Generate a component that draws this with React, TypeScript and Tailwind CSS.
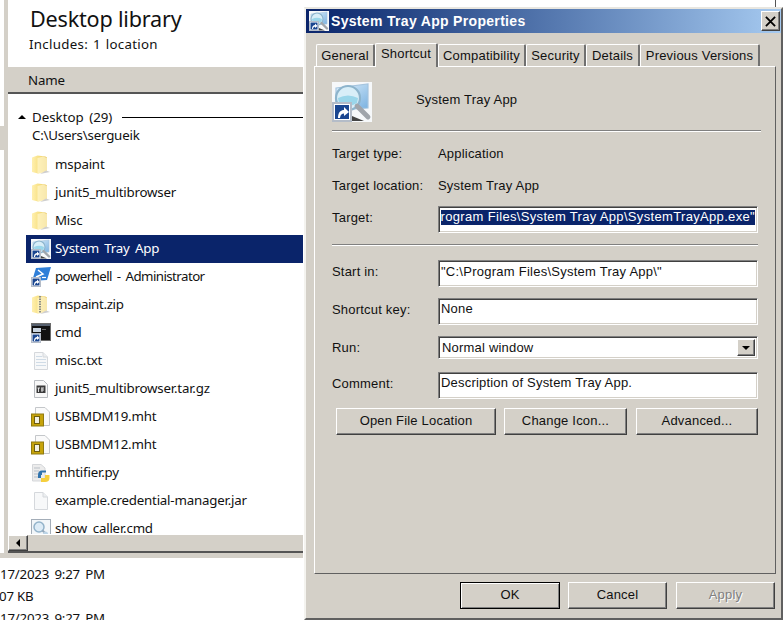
import React from "react";

const Shortcut = () => (
  <g>
    <rect x="0.5" y="10.5" width="9" height="9" fill="#fff" stroke="#b4bcc8" strokeWidth="1" />
    <rect x="1.5" y="11.5" width="7" height="7" fill="#1a4690" />
    <path d="M3 18 C3 15 4.5 14 6 14 L6 12.5 L8.5 15 L6 17 L6 15.8 C5 15.8 4.2 16.4 4 18 Z" fill="#fff" />
  </g>
);

const Tool = ({ sc = true, bg = true }: { sc?: boolean; bg?: boolean }) => (
  <svg viewBox="0 0 20 20" className="w-full h-full block">
    <defs>
      <linearGradient id="scr" x1="0" y1="0" x2="1" y2="1">
        <stop offset="0" stopColor="#e2f2fc" />
        <stop offset="1" stopColor="#78b0e0" />
      </linearGradient>
    </defs>
    {bg && <rect width="20" height="20" fill="#f6f8fa" />}
    <path d="M2 3 L18 1 L18 13 L2 14 Z" fill="url(#scr)" stroke="#a5c4de" strokeWidth="0.6" />
    <circle cx="8" cy="8" r="6" fill="#d8eef8" stroke="#8db4cc" strokeWidth="1.1" />
    <path d="M3 8 Q8 5.5 13 8 L12.5 10.5 Q8 13.5 3.5 10.5 Z" fill="#9ad6ea" />
    <path d="M12.5 12 L18 17.5" stroke="#a0a5ab" strokeWidth="2.4" strokeLinecap="round" />
    <path d="M10 17 L16 19.5 L10 19.5 Z" fill="#444" />
    {sc && <Shortcut />}
  </svg>
);

const Folder = ({ zip = false }: { zip?: boolean }) => (
  <svg viewBox="0 0 20 20" className="w-full h-full block">
    <defs>
      <linearGradient id="fo" x1="0" y1="0" x2="1" y2="0">
        <stop offset="0" stopColor="#fff0b0" />
        <stop offset="0.5" stopColor="#f7df80" />
        <stop offset="1" stopColor="#e9c964" />
      </linearGradient>
    </defs>
    <path d="M1 2.5 L6.5 0.5 L14.5 1.5 L16 2.5 L16 16.5 L7 18.5 L1 17 Z" fill="url(#fo)" />
    <path d="M6.5 3 L12 1.5 L16 3 L16 16.5 L8 18.5 L6.5 18 Z" fill="#fff8d4" opacity="0.65" />
    <path d="M9 19 L19 17 L15 15.5 Z" fill="#cfcfcf" />
    {zip ? <path d="M9 1 L9 18" stroke="#8d8f88" strokeWidth="2" strokeDasharray="1.5 1" /> : null}
  </svg>
);

const Power = () => (
  <svg viewBox="0 0 20 20" className="w-full h-full block">
    <path d="M5 1 L20 0 L16 13 L1 14 Z" fill="#2f7fd8" />
    <path d="M7 3 L12 7 L5 10" fill="none" stroke="#fff" strokeWidth="1.5" />
    <path d="M11 10.5 L15 10.5" stroke="#fff" strokeWidth="1.2" />
    <Shortcut />
  </svg>
);

const Cmd = () => (
  <svg viewBox="0 0 20 20" className="w-full h-full block">
    <rect x="0.5" y="0.5" width="19" height="17" fill="#111" stroke="#6b6b6b" />
    <rect x="1" y="1" width="18" height="2" fill="#56606e" />
    <rect x="2" y="5" width="8" height="4" fill="#c9d4e0" />
    <rect x="11" y="6" width="4" height="1" fill="#666" />
    <Shortcut />
  </svg>
);

const Doc = ({ lines = false }: { lines?: boolean }) => (
  <svg viewBox="0 0 20 20" className="w-full h-full block">
    <path d="M3.5 1.5 L12 1.5 L16.5 6 L16.5 18.5 L3.5 18.5 Z" fill="#f7f8f9" stroke="#d5d8dc" />
    <path d="M12 1.5 L12 6 L16.5 6" fill="#eceef0" stroke="#d5d8dc" />
    {lines && (
      <path d="M5 5.5 H11 M5 8.5 H15 M5 11.5 H15 M5 14.5 H15" stroke="#cfdbe6" strokeWidth="1.2" />
    )}
  </svg>
);

const Tar = () => (
  <svg viewBox="0 0 20 20" className="w-full h-full block">
    <path d="M3.5 1.5 L12.5 1.5 L16.5 5.5 L16.5 18.5 L3.5 18.5 Z" fill="#f8f8f8" stroke="#b9bcc0" />
    <rect x="5.5" y="6.5" width="9" height="7.5" fill="#3b3b3b" />
    <path d="M6.5 9 H9 M7.5 9 V13 M10 9 L13 9 M10 11 L13 11 M11 9 V13" stroke="#eee" strokeWidth="0.9" />
  </svg>
);

const Mht = () => (
  <svg viewBox="0 0 20 20" className="w-full h-full block">
    <path d="M4.5 0.5 L14 0.5 L18.5 5 L18.5 18.5 L4.5 18.5 Z" fill="#fafafa" stroke="#c4c7ca" />
    <rect x="0.5" y="7" width="12" height="12" fill="#c6a30a" stroke="#8f7a10" />
    <rect x="3.5" y="9.5" width="5" height="7" fill="#f3f1e2" stroke="#6d5d10" />
  </svg>
);

const Py = () => (
  <svg viewBox="0 0 20 20" className="w-full h-full block">
    <path d="M1.5 1.5 L10 1.5 L14 5 L14 18 L1.5 18 Z" fill="#ececec" stroke="#d5d7da" />
    <path d="M3 5 H9 M3 8 H8 M3 11 H7 M3 14 H7" stroke="#b9bfc6" strokeWidth="1" />
    <path d="M7 12 Q7 7.5 11 7.5 L15 7.5 L15 9.5 L11 9.5 L11 12 Z M7 12 L7 15 L10 15 L10 12 Z" fill="#2f73ad" />
    <path d="M10 15 L14 15 L14 12 L18.5 12 L18.5 15 Q18.5 19 14 19 L10 19 Z" fill="#f5cf3e" />
  </svg>
);

const Show = () => (
  <svg viewBox="0 0 20 20" className="w-full h-full block">
    <rect x="0.5" y="0.5" width="19" height="19" fill="#f2f6f9" stroke="#a3adb8" />
    <circle cx="8" cy="8" r="5" fill="#dcebf6" stroke="#93b3ca" strokeWidth="1.5" />
    <path d="M11.5 11.5 L15 15" stroke="#93a6b8" strokeWidth="2" />
    <circle cx="14.5" cy="15" r="2.5" fill="#bcd4e6" />
  </svg>
);

const rows: { icon: React.ReactNode; name: string; sel?: boolean; c?: string }[] = [
  { icon: <Folder />, name: "mspaint" },
  { icon: <Folder />, name: "junit5_multibrowser" },
  { icon: <Folder />, name: "Misc" },
  { icon: <Tool />, name: "System Tray App", sel: true },
  { icon: <Power />, name: "powerhell - Administrator", c: "tracking-[-0.56px]" },
  { icon: <Folder zip />, name: "mspaint.zip", c: "tracking-[-0.35px]" },
  { icon: <Cmd />, name: "cmd" },
  { icon: <Doc lines />, name: "misc.txt" },
  { icon: <Tar />, name: "junit5_multibrowser.tar.gz" },
  { icon: <Mht />, name: "USBMDM19.mht" },
  { icon: <Mht />, name: "USBMDM12.mht" },
  { icon: <Py />, name: "mhtifier.py" },
  { icon: <Doc />, name: "example.credential-manager.jar" },
  { icon: <Show />, name: "show_caller.cmd" },
];

const sunken =
  "bg-white border border-t-[#808080] border-l-[#808080] border-r-white border-b-white shadow-[inset_1px_1px_0_#404040,inset_-1px_-1px_0_#d4d0c8]";
const raised =
  "bg-[#d4d0c8] border border-t-white border-l-white border-r-[#404040] border-b-[#404040] shadow-[inset_-1px_-1px_0_#808080]";

const Divider = ({ className }: { className: string }) => (
  <div className={"h-[2px] border-t border-t-[#808080] border-b border-b-white " + className} />
);

const Explorer = () => (
  <div className="w-[304px] h-[620px] shrink-0 flex flex-col border-r border-r-white font-['Noto_Sans',sans-serif] text-[13.3px] tracking-[-0.2px] [word-spacing:2px] text-[#111]">
    <div className="h-[553px] flex">
      <div className="w-[8px] shrink-0 flex">
        <div className="w-[4px] bg-white">
          <div className="mt-[126px] h-[24px] bg-[#d4d0c8]" />
        </div>
        <div className="w-[4px] bg-[#d4d0c8]" />
      </div>
      <div className="flex-1 min-w-0 bg-white flex flex-col">
        <div className="h-[67px] pl-[22px]">
          <div className="text-[21.6px] leading-[27px] pt-[5px] h-[33px] [word-spacing:0px]">Desktop library</div>
          <div className="leading-[20px] mt-[1px] -ml-[1px] flex tracking-[0.3px] [word-spacing:1px]">
            <span className="w-[64px] shrink-0">Includes:</span>
            <span>1 location</span>
          </div>
        </div>
        <div className="h-[27px] bg-[#d4d0c8] border-b-2 border-b-[#555] pl-[20px] leading-[27px]">Name</div>
        <div className="flex-1 min-h-0 overflow-hidden">
          <div className="h-[57px] pt-[13px]">
            <div className="flex items-center h-[20px] pl-[10px]">
              <span className="w-0 h-0 border-x-[4px] border-x-transparent border-b-[4px] border-b-black" />
              <span className="ml-[6px] w-[81px] pt-[2px] whitespace-nowrap tracking-[0px]">Desktop (29)</span>
              <span className="flex-1 h-px bg-black ml-[9px] mt-[1px]" />
            </div>
            <div className="pl-[24px] leading-[16px]">C:\Users\sergueik</div>
          </div>
          {rows.map((r) => (
            <div
              key={r.name}
              className={
                "ml-[18px] h-[28px] flex items-center pl-[5px] whitespace-nowrap " +
                (r.sel ? "bg-[#0a246a] text-white" : "")
              }
            >
              <span className="w-[20px] h-[20px] shrink-0">{r.icon}</span>
              <span className={"ml-[4px] " + (r.c ?? "")}>{r.name}</span>
            </div>
          ))}
        </div>
        <div className="h-[19px] shrink-0 bg-[#d4d0c8] border-t border-t-white border-b-2 border-b-[#555] flex">
          <div className={"w-[20px] flex items-center justify-center " + raised}>
            <span className="w-0 h-0 border-y-[4px] border-y-transparent border-r-[4px] border-r-black" />
          </div>
        </div>
      </div>
    </div>
    <div className="h-[5px] bg-[#d4d0c8]" />
    <div className="flex-1 bg-white pt-[5px] overflow-hidden leading-[22px] whitespace-nowrap">
      <div>17/2023 9:27 PM</div>
      <div className="-ml-[1px] [word-spacing:0px]">07 KB</div>
      <div>17/2023 9:27 PM</div>
    </div>
  </div>
);

const tabs = [
  { t: "General", c: "w-[59px] h-[22px]" },
  { t: "Shortcut", c: "w-[63px] h-[24px]", active: true },
  { t: "Compatibility", c: "w-[88px] h-[22px]" },
  { t: "Security", c: "w-[60px] h-[22px]" },
  { t: "Details", c: "w-[54px] h-[22px]" },
  { t: "Previous Versions", c: "w-[120px] h-[22px]" },
];

const Field = ({ label, children, h = "h-[27px]", lc = "pb-[3px]" }: { label: string; children: React.ReactNode; h?: string; lc?: string }) => (
  <div className={"flex items-center " + h}>
    <div className={"w-[106px] shrink-0 " + lc}>{label}</div>
    {children}
  </div>
);

const Info = ({ label, value, className }: { label: string; value: string; className: string }) => (
  <div className={"flex items-center h-[20px] " + className}>
    <div className="w-[106px] shrink-0">{label}</div>
    <div>{value}</div>
  </div>
);

const Dialog = () => (
  <div className="w-[479px] shrink-0 flex flex-col">
    <div className="h-[7px] shrink-0 pl-[471px]">
      <div className="w-px h-full bg-[#555]" />
    </div>
    <div className="h-[613px] shrink-0 bg-[#d4d0c8] border-2 border-t-[#e8e6e0] border-l-[#f4f3ef] border-r-[#606060] border-b-[#606060] font-['Liberation_Sans',sans-serif] text-[13px] tracking-[0.2px] text-[#111] flex flex-col">
      <div className="h-[24px] shrink-0 bg-linear-to-r from-[#0a246a] to-[#a6caf0] flex items-center pl-[3px] pr-[1px]">
        <span className="w-[20px] h-[20px] shrink-0"><Tool /></span>
        <span className="ml-[2px] text-white font-bold text-[14px] tracking-[0.32px] flex-1 whitespace-nowrap">System Tray App Properties</span>
        <span className={"w-[19px] h-[20px] flex items-center justify-center " + raised}>
          <svg viewBox="0 0 12 12" className="w-[11px] h-[11px]">
            <path d="M1 1 L11 11 M11 1 L1 11" stroke="#000" strokeWidth="2" />
          </svg>
        </span>
      </div>
      <div className="ml-[8px] mt-[9px] pl-[2px] flex items-end h-[24px] relative z-10">
        {tabs.map((t) => (
          <div
            key={t.t}
            className={
              t.c +
              " shrink-0 flex items-center justify-center bg-[#d4d0c8] border-t border-l border-t-white border-l-white border-r-2 border-r-[#707070] rounded-t-[2px] whitespace-nowrap " +
              (t.active ? "-mb-px pb-[3px]" : "")
            }
          >
            {t.t}
          </div>
        ))}
      </div>
      <div className="ml-[8px] w-[462px] h-[508px] shrink-0 border border-t-white border-l-white border-r-[#606060] border-b-[#606060] px-[17px] pt-[15px]">
        <div className="flex items-center h-[40px]">
          <span className="w-[40px] h-[40px] shrink-0"><Tool /></span>
          <span className="ml-[44px] pb-[5px]">System Tray App</span>
        </div>
        <Divider className="mt-[8px] -mr-[3px]" />
        <Info className="mt-[12px]" label="Target type:" value="Application" />
        <Info className="mt-[12px]" label="Target location:" value="System Tray App" />
        <div className="mt-[10px]">
          <Field label="Target:">
            <div className={"w-[320px] h-full pt-[3px] px-[2px] overflow-hidden " + sunken}>
              <div className="bg-[#0a246a] text-white h-[15px] leading-[14px] tracking-[0.33px] whitespace-nowrap flex justify-end overflow-hidden">
                <span>"C:\Program Files\System Tray App\SystemTrayApp.exe"</span>
              </div>
            </div>
          </Field>
        </div>
        <Divider className="mt-[11px]" />
        <div className="mt-[14px]">
          <Field label="Start in:">
            <div className={"w-[320px] h-full pl-[2px] pt-[2px] leading-[18px] tracking-[0.25px] " + sunken}>"C:\Program Files\System Tray App\"</div>
          </Field>
        </div>
        <div className="mt-[11px]">
          <Field label="Shortcut key:">
            <div className={"w-[320px] h-full pl-[2px] pt-[1px] leading-[18px] " + sunken}>None</div>
          </Field>
        </div>
        <div className="mt-[11px]">
          <Field label="Run:" h="h-[23px]" lc="pb-0">
            <div className={"w-[320px] h-full pl-[3px] flex items-center justify-between pr-[2px] " + sunken}>
              <span>Normal window</span>
              <span className={"w-[18px] h-[17px] flex items-center justify-center " + raised}>
                <span className="w-0 h-0 border-x-[4px] border-x-transparent border-t-[4px] border-t-black" />
              </span>
            </div>
          </Field>
        </div>
        <div className="mt-[13px]">
          <Field label="Comment:">
            <div className={"w-[320px] h-full pl-[2px] pt-[1px] leading-[18px] " + sunken}>Description of System Tray App.</div>
          </Field>
        </div>
        <div className="mt-[9px] ml-[4px] flex">
          <div className={"w-[160px] h-[27px] flex items-center justify-center pb-[2px] " + raised}>Open File Location</div>
          <div className={"ml-[8px] w-[123px] h-[27px] flex items-center justify-center pb-[2px] " + raised}>Change Icon...</div>
          <div className={"ml-[9px] w-[122px] h-[27px] flex items-center justify-center pb-[2px] " + raised}>Advanced...</div>
        </div>
      </div>
      <div className="mt-[8px] ml-[154px] flex">
        <div className="w-[100px] h-[27px] flex items-center justify-center pb-[2px] border border-black bg-[#d4d0c8] shadow-[inset_1px_1px_0_white,inset_-1px_-1px_0_#808080]">OK</div>
        <div className={"ml-[8px] w-[99px] h-[27px] flex items-center justify-center pb-[2px] " + raised}>Cancel</div>
        <div className={"ml-[9px] w-[99px] h-[27px] flex items-center justify-center pb-[2px] text-[#808080] [text-shadow:1px_1px_0_white] " + raised}>Apply</div>
      </div>
    </div>
  </div>
);

export default function App() {
  return (
    <div className="w-[783px] h-[620px] overflow-hidden flex bg-white">
      <Explorer />
      <Dialog />
    </div>
  );
}
